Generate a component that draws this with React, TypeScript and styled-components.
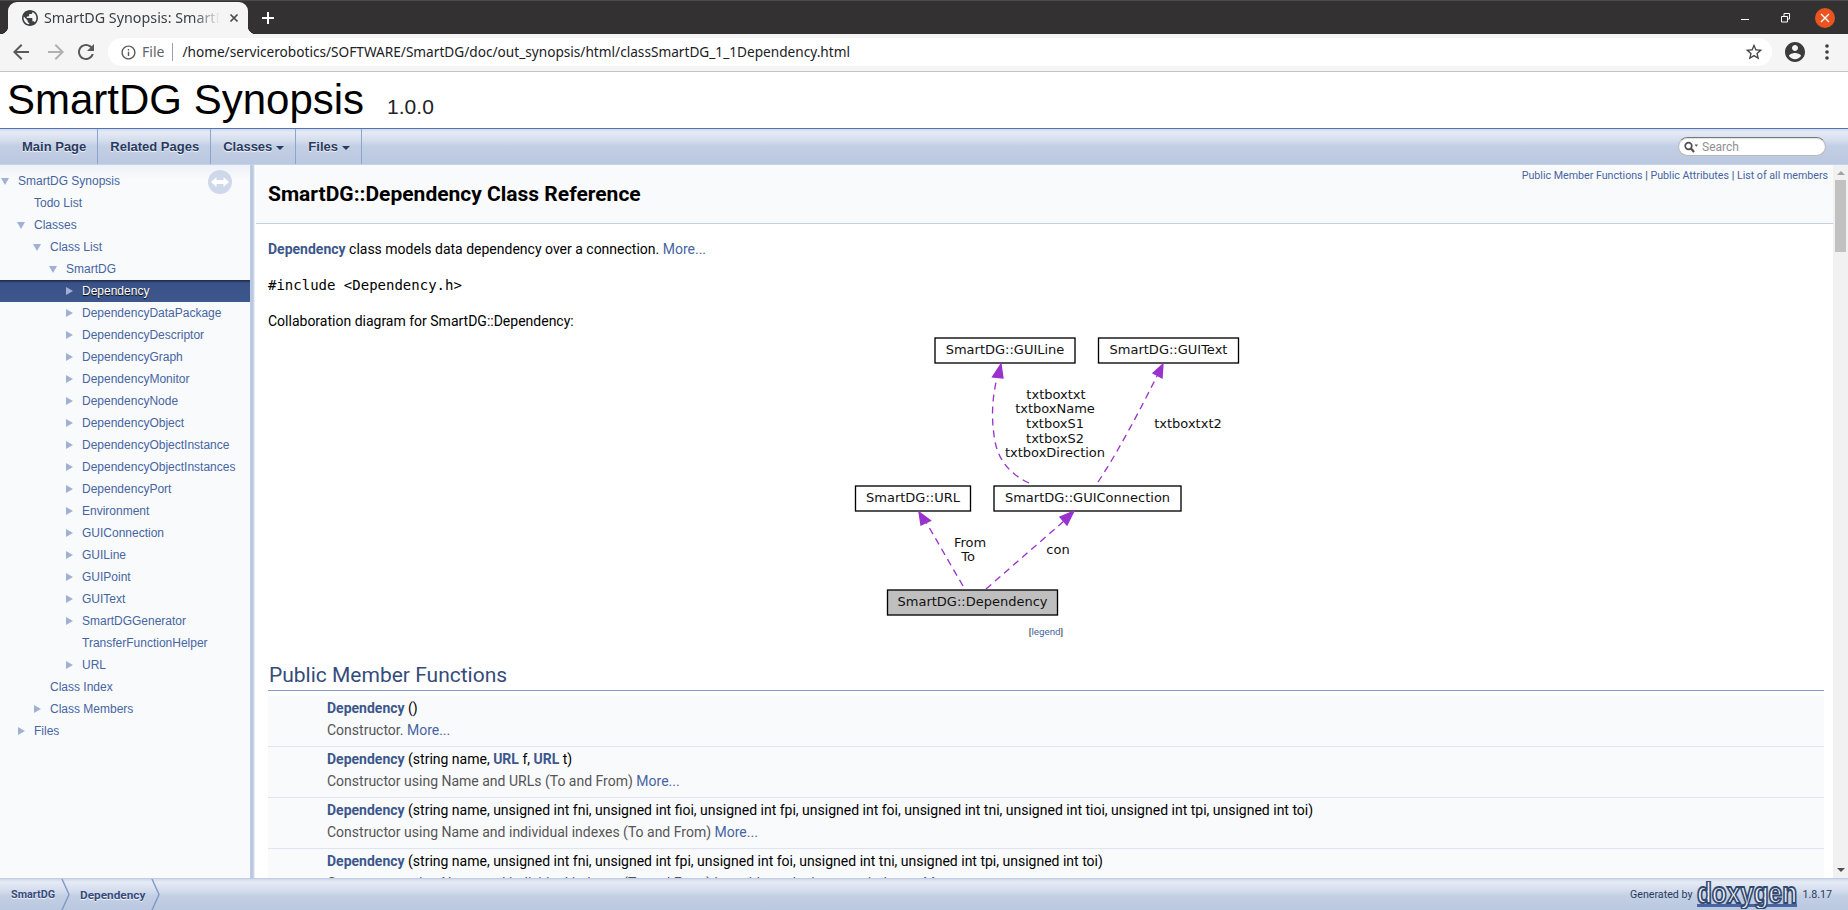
import React from "react";
import styled, { createGlobalStyle } from "styled-components";

const GlobalStyle = createGlobalStyle`
  html, body {
    margin: 0;
    height: 100%;
    overflow: hidden;
    background: #fff;
  }
  #root {
    height: 100%;
  }
  * {
    box-sizing: border-box;
  }
`;

const barGradient = "linear-gradient(to bottom, #cfd9ea 0, #e6ebf5 3px, #d3dcec 12px, #c2cfe4 17px, #bac8e0 100%)";

const Page = styled.div`
  display: flex;
  flex-direction: column;
  height: 910px;
  width: 1848px;
  overflow: hidden;
`;

/* browser chrome */
const TabStrip = styled.div`
  display: flex;
  align-items: flex-end;
  height: 34px;
  flex: none;
  background: #333131;
  border-top: 1px solid #4c4a4a;
  padding-left: 8px;
`;

const Tab = styled.div`
  position: relative;
  display: flex;
  align-items: center;
  width: 240px;
  height: 32px;
  padding: 0 9px 0 14px;
  background: #f5f5f5;
  border-radius: 9px 9px 0 0;
  &::before,
  &::after {
    content: "";
    position: absolute;
    bottom: 0;
    width: 8px;
    height: 8px;
  }
  &::before {
    left: -8px;
    background: radial-gradient(circle at 0 0, #333131 8px, #f5f5f5 8.5px);
  }
  &::after {
    right: -8px;
    background: radial-gradient(circle at 100% 0, #333131 8px, #f5f5f5 8.5px);
  }
`;

const TabTitle = styled.span`
  flex: 1;
  margin-left: 6px;
  font: 400 14.3px/18px "Noto Sans", sans-serif;
  color: #3c4043;
  white-space: nowrap;
  overflow: hidden;
  -webkit-mask-image: linear-gradient(to right, #000 150px, transparent 176px);
  mask-image: linear-gradient(to right, #000 150px, transparent 176px);
`;

const NewTab = styled.div`
  display: flex;
  align-items: center;
  height: 32px;
  margin-left: 14px;
`;

const WindowButtons = styled.div`
  display: flex;
  align-items: center;
  gap: 20px;
  height: 32px;
  margin-left: auto;
  padding-right: 13px;
`;

const CloseCircle = styled.div`
  display: flex;
  align-items: center;
  justify-content: center;
  width: 20px;
  height: 20px;
  border-radius: 50%;
  background: #e95420;
`;

const Toolbar = styled.div`
  display: flex;
  align-items: center;
  flex: none;
  height: 38px;
  background: #f5f5f5;
  border-bottom: 1px solid #c4c4c4;
  padding: 0 12px 1px 9px;
`;

const NavIcon = styled.svg<{ $gap?: number }>`
  flex: none;
  width: 24px;
  height: 24px;
  margin-right: ${(p) => p.$gap ?? 0}px;
`;

const Omnibox = styled.div`
  display: flex;
  align-items: center;
  flex: 1;
  height: 28px;
  margin-left: 10px;
  padding: 0 8px 0 12px;
  background: #fff;
  border-radius: 14px;
`;

const FileLabel = styled.span`
  margin-left: 5px;
  padding-right: 8px;
  font: 400 14px/18px "Noto Sans", sans-serif;
  color: #5f6368;
  border-right: 1px solid #9aa0a6;
`;

const UrlText = styled.span`
  margin-left: 9px;
  flex: 1;
  font: 400 13.65px/18px "Noto Sans", sans-serif;
  color: #202124;
  white-space: nowrap;
`;

const ToolbarRight = styled.div`
  display: flex;
  align-items: center;
  gap: 11px;
  margin-left: 11px;
`;

/* doxygen title */
const TitleArea = styled.div`
  flex: none;
  height: 56px;
  padding: 3px 7px 0;
  font: 400 42px/49px "Liberation Sans", Arial, sans-serif;
  color: #000;
  background: #fff;
`;

const ProjectNumber = styled.span`
  margin-left: 23px;
  font-size: 21px;
  color: #222;
`;

const MenuBar = styled.nav`
  display: flex;
  align-items: center;
  flex: none;
  height: 37px;
  padding-left: 10px;
  border-top: 1px solid #5373b4;
  border-bottom: 1px solid #c7d2e6;
  background: ${barGradient};
`;

const MenuItem = styled.a`
  display: flex;
  align-items: center;
  height: 100%;
  padding: 0 11px 0 12px;
  font: 700 13px/36px "Liberation Sans", Arial, sans-serif;
  color: #283a5d;
  text-shadow: 0 1px 1px rgba(255, 255, 255, 0.9);
  border-right: 1px solid #8ea3cd;
`;

const Caret = styled.span`
  width: 0;
  height: 0;
  margin-left: 4px;
  margin-top: 2px;
  border-left: 4px solid transparent;
  border-right: 4px solid transparent;
  border-top: 4px solid #283a5d;
`;

const SearchBox = styled.div`
  display: flex;
  align-items: center;
  width: 148px;
  height: 19px;
  margin-left: auto;
  margin-right: 22px;
  padding-left: 5px;
  background: #fff;
  border: 1px solid #b9b9b9;
  border-top-color: #777;
  border-radius: 10px;
  box-shadow: inset 0 1px 1px rgba(0, 0, 0, 0.12);
`;

const SearchLabel = styled.span`
  margin-left: 4px;
  font: 400 12px/16px Roboto, Arial, sans-serif;
  color: #909090;
`;

/* main area */
const Body = styled.div`
  display: flex;
  flex: 1;
  min-height: 0;
`;

const SideNav = styled.aside`
  position: relative;
  flex: none;
  width: 250px;
  padding-top: 5px;
  background: linear-gradient(to bottom, #eef1f8 0, #f9fafc 14px);
  overflow: hidden;
`;

const SyncButton = styled.div`
  position: absolute;
  top: 5px;
  left: 208px;
  display: flex;
  align-items: center;
  justify-content: center;
  width: 24px;
  height: 24px;
  border-radius: 50%;
  background: #ced8ea;
`;

const TreeRow = styled.div<{ $level: number; $selected?: boolean }>`
  display: flex;
  align-items: center;
  height: 22px;
  padding-left: ${(p) => p.$level * 16}px;
  font: 400 12px/22px "Liberation Sans", Arial, Verdana, sans-serif;
  white-space: nowrap;
  color: ${(p) => (p.$selected ? "#fff" : "#4665a2")};
  background: ${(p) => (p.$selected ? "linear-gradient(to bottom, #1c2a48 0, #3a5288 3px, #3d578c 100%)" : "none")};
  text-shadow: ${(p) => (p.$selected ? "0 1px 1px #000" : "none")};
`;

const ArrowSlot = styled.span`
  display: flex;
  align-items: center;
  justify-content: center;
  flex: none;
  width: 18px;
  padding-right: 8px;
`;

const ArrowDown = styled.span`
  width: 0;
  height: 0;
  border-left: 4px solid transparent;
  border-right: 4px solid transparent;
  border-top: 7px solid #a0b1d3;
`;

const ArrowRight = styled.span`
  width: 0;
  height: 0;
  border-top: 4px solid transparent;
  border-bottom: 4px solid transparent;
  border-left: 7px solid #a0b1d3;
`;

const SplitBar = styled.div`
  flex: none;
  width: 6px;
  background: linear-gradient(to right, #c3cfe4 0, #b4c3de 2px, #d2dbec 4px, #fff 5px);
`;

const DocColumn = styled.main`
  display: flex;
  flex: 1;
  min-width: 0;
`;

const DocContent = styled.div`
  flex: 1;
  min-width: 0;
  overflow: hidden;
  font: 400 14px/22px Roboto, sans-serif;
  color: #000;
`;

const DocHeader = styled.header`
  height: 59px;
  padding: 0 5px 0 12px;
  background: #f9fafc;
  border-bottom: 1px solid #c4cfe5;
`;

const Summary = styled.div`
  float: right;
  padding-top: 3px;
  font-size: 10.67px;
  line-height: 15px;
  color: #2a3d61;
`;

const PageTitle = styled.h1`
  margin: 0;
  padding-top: 15px;
  font: 700 21px/28px Roboto, sans-serif;
  color: #000;
`;

const Contents = styled.div`
  padding: 14px 9px 0 12px;
`;

const Paragraph = styled.p`
  margin: 0 0 14px;
`;

const Caption = styled.p`
  margin: 0;
`;

const Code = styled.div`
  margin-bottom: 14px;
  font: 400 14px/22px "DejaVu Sans Mono", monospace;
`;

const Link = styled.a<{ $bold?: boolean }>`
  color: ${(p) => (p.$bold ? "#3d578c" : "#4665a2")};
  font-weight: ${(p) => (p.$bold ? 700 : 400)};
`;

const Diagram = styled.figure`
  display: flex;
  flex-direction: column;
  align-items: center;
  margin: 0;
`;

const Legend = styled.div`
  margin-top: 1px;
  font-size: 9.8px;
  line-height: 22px;
  color: #333;
`;

const GroupHeader = styled.h2`
  margin: 20px 0 5px;
  padding: 0 0 2px 1px;
  font: 400 21px/25px Roboto, sans-serif;
  color: #354c7b;
  border-bottom: 1px solid #879ecb;
`;

const MemberRow = styled.div`
  height: 51px;
  padding: 1px 0 0 59px;
  background: #f9fafc;
  border-bottom: 1px solid #dee4f0;
  white-space: nowrap;
`;

const MemberDesc = styled.div`
  color: #555;
`;

const Scrollbar = styled.div`
  display: flex;
  flex-direction: column;
  align-items: center;
  flex: none;
  width: 15px;
  background: #f1f1f1;
`;

const ScrollUp = styled.span`
  margin-top: 6px;
  border-left: 4px solid transparent;
  border-right: 4px solid transparent;
  border-bottom: 4px solid #a3a3a3;
`;

const ScrollThumb = styled.div`
  width: 11px;
  height: 72px;
  margin-top: 5px;
  background: #c1c1c1;
`;

const ScrollDown = styled.span`
  margin-top: auto;
  margin-bottom: 6px;
  border-left: 4px solid transparent;
  border-right: 4px solid transparent;
  border-top: 4px solid #505050;
`;

/* footer */
const Footer = styled.footer`
  display: flex;
  align-items: center;
  flex: none;
  height: 32px;
  padding-left: 11px;
  border-top: 1px solid #c2cde4;
  background: ${barGradient};
`;

const Crumb = styled.a<{ $current?: boolean }>`
  font: 700 ${(p) => (p.$current ? "11.8px" : "10.8px")}/30px Roboto, sans-serif;
  color: #364d7c;
  text-shadow: 0 1px 1px rgba(255, 255, 255, 0.9);
`;

const CrumbSep = styled.svg`
  flex: none;
  width: 9px;
  height: 31px;
  margin: 0 10px 0 6px;
`;

const FooterRight = styled.div`
  display: flex;
  align-items: center;
  gap: 3px;
  margin-left: auto;
  padding-right: 16px;
  font-size: 10.67px;
  font-family: Roboto, sans-serif;
  color: #2a3d61;
`;

const LogoSvg = styled.svg`
  flex: none;
  width: 104px;
  height: 28px;
`;

const BackIcon = () => (
  <NavIcon viewBox="0 0 24 24" $gap={11} fill="#5a5a5a">
    <path d="M20 11H7.83l5.59-5.59L12 4l-8 8 8 8 1.41-1.41L7.83 13H20v-2z" />
  </NavIcon>
);

const ForwardIcon = () => (
  <NavIcon viewBox="0 0 24 24" $gap={6} fill="#b0b0b0">
    <path d="M12 4l-1.41 1.41L16.17 11H4v2h12.17l-5.58 5.59L12 20l8-8z" />
  </NavIcon>
);

const ReloadIcon = () => (
  <NavIcon viewBox="0 0 24 24" fill="#5a5a5a">
    <path d="M17.65 6.35C16.2 4.9 14.21 4 12 4c-4.42 0-7.99 3.58-7.99 8s3.57 8 7.99 8c3.73 0 6.84-2.55 7.73-6h-2.08c-.82 2.33-3.04 4-5.65 4-3.31 0-6-2.69-6-6s2.69-6 6-6c1.66 0 3.14.69 4.22 1.78L13 11h7V4l-2.35 2.35z" />
  </NavIcon>
);

const treeItems: { label: string; level: number; arrow?: "down" | "right"; selected?: boolean }[] = [
  { label: "SmartDG Synopsis", level: 0, arrow: "down" },
  { label: "Todo List", level: 1 },
  { label: "Classes", level: 1, arrow: "down" },
  { label: "Class List", level: 2, arrow: "down" },
  { label: "SmartDG", level: 3, arrow: "down" },
  { label: "Dependency", level: 4, arrow: "right", selected: true },
  { label: "DependencyDataPackage", level: 4, arrow: "right" },
  { label: "DependencyDescriptor", level: 4, arrow: "right" },
  { label: "DependencyGraph", level: 4, arrow: "right" },
  { label: "DependencyMonitor", level: 4, arrow: "right" },
  { label: "DependencyNode", level: 4, arrow: "right" },
  { label: "DependencyObject", level: 4, arrow: "right" },
  { label: "DependencyObjectInstance", level: 4, arrow: "right" },
  { label: "DependencyObjectInstances", level: 4, arrow: "right" },
  { label: "DependencyPort", level: 4, arrow: "right" },
  { label: "Environment", level: 4, arrow: "right" },
  { label: "GUIConnection", level: 4, arrow: "right" },
  { label: "GUILine", level: 4, arrow: "right" },
  { label: "GUIPoint", level: 4, arrow: "right" },
  { label: "GUIText", level: 4, arrow: "right" },
  { label: "SmartDGGenerator", level: 4, arrow: "right" },
  { label: "TransferFunctionHelper", level: 4 },
  { label: "URL", level: 4, arrow: "right" },
  { label: "Class Index", level: 2 },
  { label: "Class Members", level: 2, arrow: "right" },
  { label: "Files", level: 1, arrow: "right" },
];

const boxes = [
  { x: 935, y: 338, w: 140, label: "SmartDG::GUILine" },
  { x: 1098.5, y: 338, w: 140, label: "SmartDG::GUIText" },
  { x: 855.5, y: 486, w: 115, label: "SmartDG::URL" },
  { x: 994, y: 486, w: 187, label: "SmartDG::GUIConnection" },
  { x: 887.5, y: 590, w: 170, label: "SmartDG::Dependency", fill: "#bfbfbf" },
];

const edgeLabels = [
  { x: 1056, y: 399, label: "txtboxtxt" },
  { x: 1055, y: 413, label: "txtboxName" },
  { x: 1055, y: 428, label: "txtboxS1" },
  { x: 1055, y: 443, label: "txtboxS2" },
  { x: 1055, y: 457, label: "txtboxDirection" },
  { x: 1188, y: 428, label: "txtboxtxt2" },
  { x: 970, y: 547, label: "From" },
  { x: 968, y: 561, label: "To" },
  { x: 1058, y: 554, label: "con" },
];

const CollaborationGraph = () => (
  <svg width={400} height={288} viewBox="846 332 400 288" fontFamily="'DejaVu Sans', sans-serif" fontSize={13}>
    {boxes.map((b) => (
      <g key={b.label}>
        <rect x={b.x} y={b.y} width={b.w} height={25} fill={b.fill ?? "#fff"} stroke="#000" strokeWidth={1.33} />
        <text x={b.x + b.w / 2} y={b.y + 16} textAnchor="middle" fill="#111">
          {b.label}
        </text>
      </g>
    ))}
    {edgeLabels.map((l) => (
      <text key={l.label} x={l.x} y={l.y} textAnchor="middle" fill="#111">
        {l.label}
      </text>
    ))}
    <g fill="none" stroke="#9a32cd" strokeWidth={1.33} strokeDasharray="7,5">
      <path d="M1029,483 C1011,475 998,460 995,441 C991,420 992,398 997,378" />
      <path d="M1098,482 C1118,452 1140,410 1157,376" />
      <path d="M963,586 L926,522" />
      <path d="M986,589 L1064,521" />
    </g>
    <g fill="#9a32cd" stroke="#9a32cd" strokeWidth={1.33}>
      <polygon points="1001,364 1003,378 992.5,377" />
      <polygon points="1163,364 1162,378 1153,373" />
      <polygon points="919,512 930.5,520.5 921,525" />
      <polygon points="1074,511 1067,525 1060,517" />
    </g>
  </svg>
);

const More = () => <Link>More...</Link>;
const Dep = () => <Link $bold>Dependency</Link>;
const Url = () => <Link $bold>URL</Link>;

const App = () => (
  <>
    <GlobalStyle />
    <Page>
      <TabStrip>
        <Tab>
          <svg width={16} height={16} viewBox="2 2 20 20" fill="#3c4043">
            <path d="M12 2C6.48 2 2 6.48 2 12s4.48 10 10 10 10-4.48 10-10S17.52 2 12 2zm-1 17.93c-3.95-.49-7-3.85-7-7.93 0-.62.08-1.21.21-1.79L9 15v1c0 1.1.9 2 2 2v1.93zm6.9-2.54c-.26-.81-1-1.39-1.9-1.39h-1v-3c0-.55-.45-1-1-1H8v-2h2c.55 0 1-.45 1-1V7h2c1.1 0 2-.9 2-2v-.41c2.93 1.19 5 4.06 5 7.41 0 2.08-.8 3.97-2.1 5.39z" />
          </svg>
          <TabTitle>SmartDG Synopsis: SmartDG::Dependency Class Reference</TabTitle>
          <svg width={10} height={10} viewBox="0 0 10 10" stroke="#4a4a4a" strokeWidth={1.7}>
            <path d="M1.5 1.5l7 7M8.5 1.5l-7 7" />
          </svg>
        </Tab>
        <NewTab>
          <svg width={12} height={12} viewBox="0 0 12 12" stroke="#fff" strokeWidth={2}>
            <path d="M6 0v12M0 6h12" />
          </svg>
        </NewTab>
        <WindowButtons>
          <svg width={20} height={20} viewBox="0 0 20 20" stroke="#fff" strokeWidth={1}>
            <path d="M6 11.5h8" />
          </svg>
          <svg width={20} height={20} viewBox="0 0 20 20" fill="none" stroke="#fff" strokeWidth={1}>
            <path d="M6.5 8.5h6v5.5h-6zM9 8.5V5.5h5.5v5.5h-2" />
          </svg>
          <CloseCircle>
            <svg width={10} height={10} viewBox="0 0 10 10" stroke="#fff" strokeWidth={1.3}>
              <path d="M1 1l8 8M9 1l-8 8" />
            </svg>
          </CloseCircle>
        </WindowButtons>
      </TabStrip>
      <Toolbar>
        <BackIcon />
        <ForwardIcon />
        <ReloadIcon />
        <Omnibox>
          <svg width={17} height={17} viewBox="0 0 24 24" fill="#5a5a5a">
            <path d="M11 7h2v2h-2zm0 4h2v6h-2zm1-9C6.48 2 2 6.48 2 12s4.48 10 10 10 10-4.48 10-10S17.52 2 12 2zm0 18c-4.41 0-8-3.59-8-8s3.59-8 8-8 8 3.59 8 8-3.59 8-8 8z" />
          </svg>
          <FileLabel>File</FileLabel>
          <UrlText>/home/servicerobotics/SOFTWARE/SmartDG/doc/out_synopsis/html/classSmartDG_1_1Dependency.html</UrlText>
          <svg width={20} height={20} viewBox="0 0 24 24" fill="#444">
            <path d="M22 9.24l-7.19-.62L12 2 9.19 8.63 2 9.24l5.46 4.73L5.82 21 12 17.27 18.18 21l-1.63-7.03L22 9.24zM12 15.4l-3.76 2.27 1-4.28-3.32-2.88 4.38-.38L12 6.1l1.71 4.04 4.38.38-3.32 2.88 1 4.28L12 15.4z" />
          </svg>
        </Omnibox>
        <ToolbarRight>
          <svg width={24} height={24} viewBox="0 0 24 24" fill="#3c3c3c">
            <path d="M12 2C6.48 2 2 6.48 2 12s4.48 10 10 10 10-4.48 10-10S17.52 2 12 2zm0 3c1.66 0 3 1.34 3 3s-1.34 3-3 3-3-1.34-3-3 1.34-3 3-3zm0 14.2c-2.5 0-4.71-1.28-6-3.22.03-1.99 4-3.08 6-3.08 1.99 0 5.97 1.09 6 3.08-1.29 1.94-3.5 3.22-6 3.22z" />
          </svg>
          <svg width={18} height={18} viewBox="0 0 18 18" fill="#3c3c3c">
            <circle cx={9} cy={3} r={1.8} />
            <circle cx={9} cy={9} r={1.8} />
            <circle cx={9} cy={15} r={1.8} />
          </svg>
        </ToolbarRight>
      </Toolbar>

      <TitleArea>
        SmartDG Synopsis<ProjectNumber>1.0.0</ProjectNumber>
      </TitleArea>
      <MenuBar>
        <MenuItem>Main Page</MenuItem>
        <MenuItem>Related Pages</MenuItem>
        <MenuItem>
          Classes<Caret />
        </MenuItem>
        <MenuItem>
          Files<Caret />
        </MenuItem>
        <SearchBox>
          <svg width={14} height={12} viewBox="0 0 14 12" fill="none" stroke="#505050">
            <circle cx={4.5} cy={5} r={3.3} strokeWidth={1.7} />
            <path d="M7 7.5l3 3.5" strokeWidth={2.2} />
            <path d="M10.5 3.5h3.5l-1.75 2.2z" fill="#505050" stroke="none" />
          </svg>
          <SearchLabel>Search</SearchLabel>
        </SearchBox>
      </MenuBar>

      <Body>
        <SideNav>
          <SyncButton>
            <svg width={18} height={10} viewBox="0 0 18 10" fill="#fff">
              <path d="M0 5l5.5-5v3h7V0L18 5l-5.5 5V7h-7v3z" />
            </svg>
          </SyncButton>
          {treeItems.map((item) => (
            <TreeRow key={item.label} $level={item.level} $selected={item.selected}>
              <ArrowSlot>
                {item.arrow === "down" && <ArrowDown />}
                {item.arrow === "right" && <ArrowRight />}
              </ArrowSlot>
              {item.label}
            </TreeRow>
          ))}
        </SideNav>
        <SplitBar />
        <DocColumn>
          <DocContent>
            <DocHeader>
              <Summary>
                <Link>Public Member Functions</Link> | <Link>Public Attributes</Link> | <Link>List of all members</Link>
              </Summary>
              <PageTitle>SmartDG::Dependency Class Reference</PageTitle>
            </DocHeader>
            <Contents>
              <Paragraph>
                <Dep /> class models data dependency over a connection. <More />
              </Paragraph>
              <Code>#include &lt;Dependency.h&gt;</Code>
              <Caption>Collaboration diagram for SmartDG::Dependency:</Caption>
              <Diagram>
                <CollaborationGraph />
                <Legend>
                  [<Link>legend</Link>]
                </Legend>
              </Diagram>
              <GroupHeader>Public Member Functions</GroupHeader>
              <MemberRow>
                <Dep /> ()
                <MemberDesc>
                  Constructor. <More />
                </MemberDesc>
              </MemberRow>
              <MemberRow>
                <Dep /> (string name, <Url /> f, <Url /> t)
                <MemberDesc>
                  Constructor using Name and URLs (To and From) <More />
                </MemberDesc>
              </MemberRow>
              <MemberRow>
                <Dep /> (string name, unsigned int fni, unsigned int fioi, unsigned int fpi, unsigned int foi, unsigned int tni, unsigned int tioi, unsigned int tpi, unsigned int toi)
                <MemberDesc>
                  Constructor using Name and individual indexes (To and From) <More />
                </MemberDesc>
              </MemberRow>
              <MemberRow>
                <Dep /> (string name, unsigned int fni, unsigned int fpi, unsigned int foi, unsigned int tni, unsigned int tpi, unsigned int toi)
                <MemberDesc>
                  Constructor using Name and individual indexes (To and From) but without the instance indexes. <More />
                </MemberDesc>
              </MemberRow>
            </Contents>
          </DocContent>
          <Scrollbar>
            <ScrollUp />
            <ScrollThumb />
            <ScrollDown />
          </Scrollbar>
        </DocColumn>
      </Body>

      <Footer>
        <Crumb>SmartDG</Crumb>
        <CrumbSep viewBox="0 0 9 31" fill="none" stroke="#7f98c8" strokeWidth={1.4}>
          <path d="M1 0l7 15.5L1 31" />
        </CrumbSep>
        <Crumb $current>Dependency</Crumb>
        <CrumbSep viewBox="0 0 9 31" fill="none" stroke="#7f98c8" strokeWidth={1.4}>
          <path d="M1 0l7 15.5L1 31" />
        </CrumbSep>
        <FooterRight>
          Generated by
          <LogoSvg viewBox="0 0 104 28">
            <rect x={2} y={23} width={100} height={3} fill="#4665a2" />
            <text x={52} y={22} textAnchor="middle" fontFamily="'Liberation Sans', sans-serif" fontWeight={700} fontSize={29} textLength={100} lengthAdjust="spacingAndGlyphs" fill="#eef2f9" stroke="#34496f" strokeWidth={1.9}>
              doxygen
            </text>
          </LogoSvg>
          1.8.17
        </FooterRight>
      </Footer>
    </Page>
  </>
);

export default App;
